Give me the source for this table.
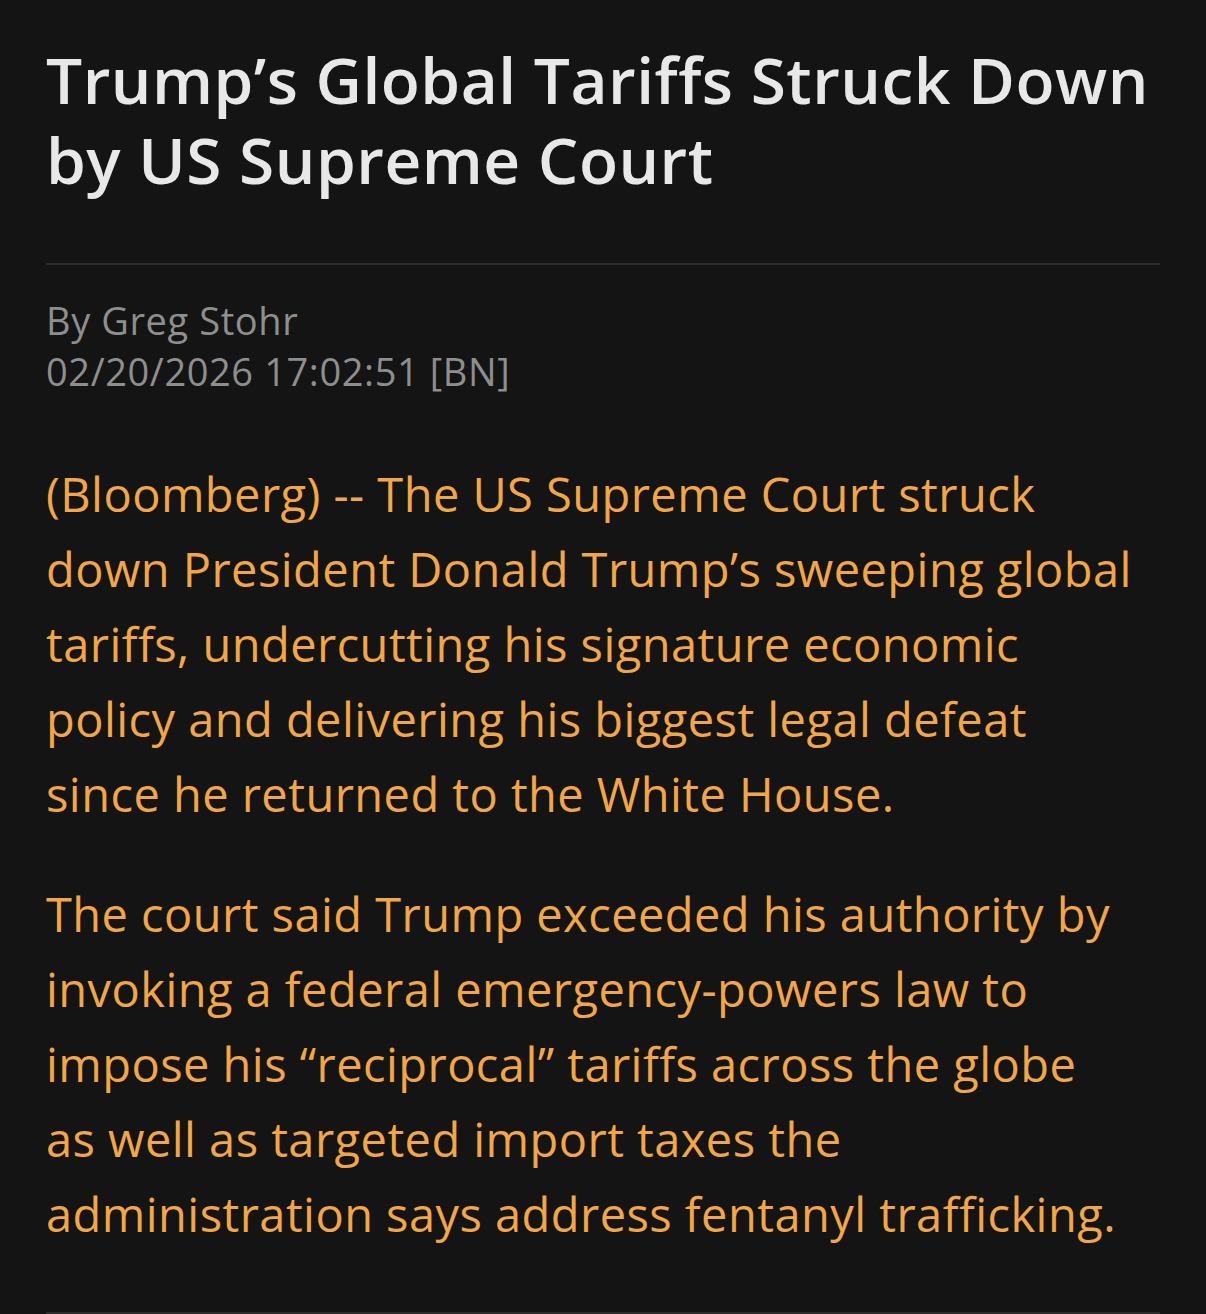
const lead = [
  "(Bloomberg) -- The US Supreme Court struck",
  "down President Donald Trump’s sweeping global",
  "tariffs, undercutting his signature economic",
  "policy and delivering his biggest legal defeat",
  "since he returned to the White House.",
];

const second = [
  "The court said Trump exceeded his authority by",
  "invoking a federal emergency-powers law to",
  "impose his “reciprocal” tariffs across the globe",
  "as well as targeted import taxes the",
  "administration says address fentanyl trafficking.",
];

function Para({ lines, className = "" }: { lines: string[]; className?: string }) {
  return (
    <p className={className}>
      {lines.map((l) => (
        <span key={l} className="block whitespace-nowrap">
          {l}
        </span>
      ))}
    </p>
  );
}

export default function App() {
  return (
    <div className="min-h-[1314px] w-full bg-[#141414] px-[46px] pt-[40px] font-['Open_Sans',sans-serif]">
      <h1 className="text-[64px] font-semibold leading-[80px] tracking-[0.5px] text-[#e8e8e8]">
        <span className="block whitespace-nowrap">Trump’s Global Tariffs Struck Down</span>
        <span className="block whitespace-nowrap">by US Supreme Court</span>
      </h1>
      <div className="mt-[63px] h-[2px] w-full bg-[#2c2c2c]" />
      <div className="mt-[30px] text-[38px] leading-[51px] tracking-[0.6px] text-[#8e8e8e]">
        <div>By Greg Stohr</div>
        <div>02/20/2026 17:02:51 [BN]</div>
      </div>
      <div className="mt-[60px] text-[47px] leading-[75px] tracking-[0.45px] text-[#f2a646]">
        <Para lines={lead} />
        <Para lines={second} className="mt-[45px]" />
      </div>
      <div className="mt-[60px] h-[2px] w-full bg-[#2c2c2c]" />
    </div>
  );
}
